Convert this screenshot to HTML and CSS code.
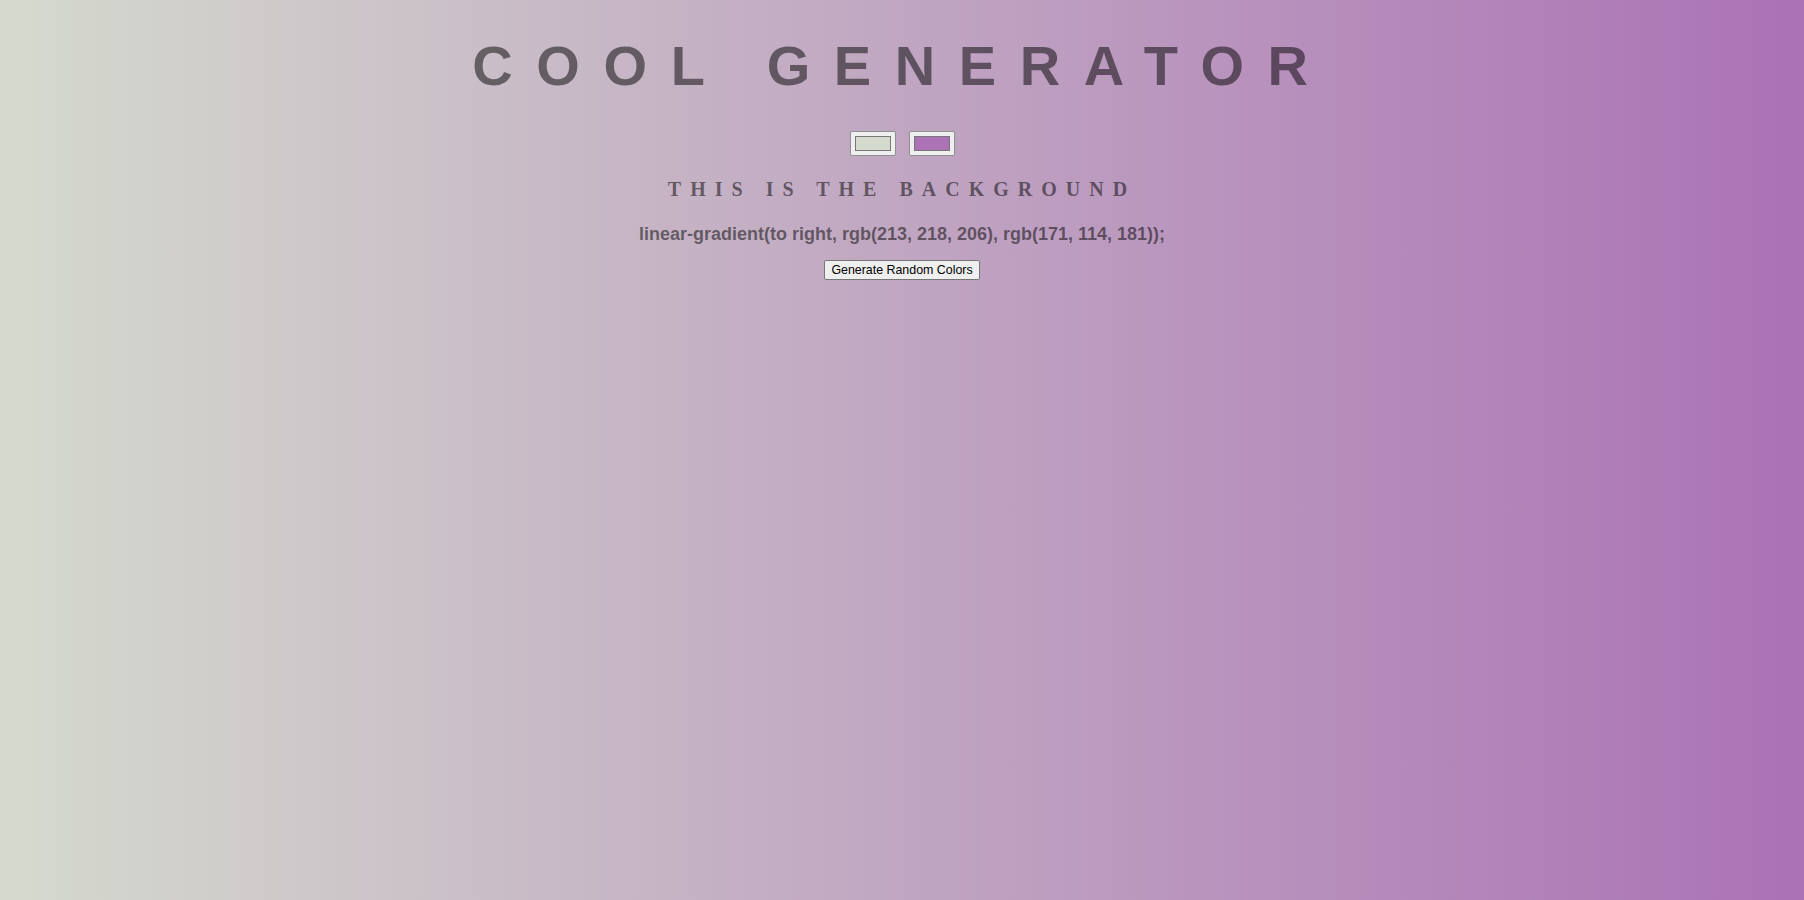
FILE: index.html
```html
<!DOCTYPE html>
<html lang="en">
<head>
<meta charset="utf-8">
<title>Cool Generator</title>
<link rel="stylesheet" href="styles.css">
</head>
<body>
<main class="page">
  <h1 class="title">COOL GENERATOR</h1>
  <div class="pickers">
    <input class="picker" type="color" value="#d5dace">
    <input class="picker" type="color" value="#ab72b5">
  </div>
  <h3 class="subtitle">THIS IS THE BACKGROUND</h3>
  <p class="code">linear-gradient(to right, rgb(213, 218, 206), rgb(171, 114, 181));</p>
  <button class="random" type="button">Generate Random Colors</button>
</main>
</body>
</html>
```

FILE: styles.css
```css
html, body {
  margin: 0;
  padding: 0;
  height: 100%;
}

body {
  background: linear-gradient(to right, rgb(213, 218, 206), rgb(171, 114, 181));
  font-family: "Liberation Sans", Arial, sans-serif;
}

.page {
  display: flex;
  flex-direction: column;
  align-items: center;
  padding-top: 38px;
}

.title {
  margin: 0;
  font-family: "Liberation Sans", Arial, sans-serif;
  font-weight: bold;
  font-size: 56px;
  line-height: 56px;
  letter-spacing: 23.6px;
  color: rgba(0, 0, 0, 0.5);
}

.pickers {
  display: flex;
  gap: 13px;
  margin-top: 37px;
}

.picker {
  width: 46px;
  height: 25px;
  box-sizing: border-box;
  margin: 0;
  padding: 0;
  border: 1px solid #8f8f8f;
  border-radius: 2px;
  background: #efefef;
  cursor: pointer;
}

.picker::-webkit-color-swatch-wrapper {
  padding: 4px;
}

.picker::-webkit-color-swatch {
  border: 1px solid #777777;
  border-radius: 0;
}

.subtitle {
  margin: 23px 0 0;
  font-family: "Liberation Serif", "Times New Roman", serif;
  font-weight: bold;
  font-size: 20px;
  line-height: 20px;
  letter-spacing: 9px;
  color: rgba(0, 0, 0, 0.5);
}

.code {
  margin: 26px 0 0;
  font-family: "Liberation Sans", Arial, sans-serif;
  font-weight: bold;
  font-size: 18px;
  line-height: 18px;
  color: rgba(0, 0, 0, 0.5);
}

.random {
  margin-top: 17px;
  height: 20px;
  padding: 0 6px;
  font-family: "Liberation Sans", Arial, sans-serif;
  font-size: 12.4px;
  color: #000;
  background: #efefef;
  border: 1px solid #767676;
  border-radius: 2px;
}
```
